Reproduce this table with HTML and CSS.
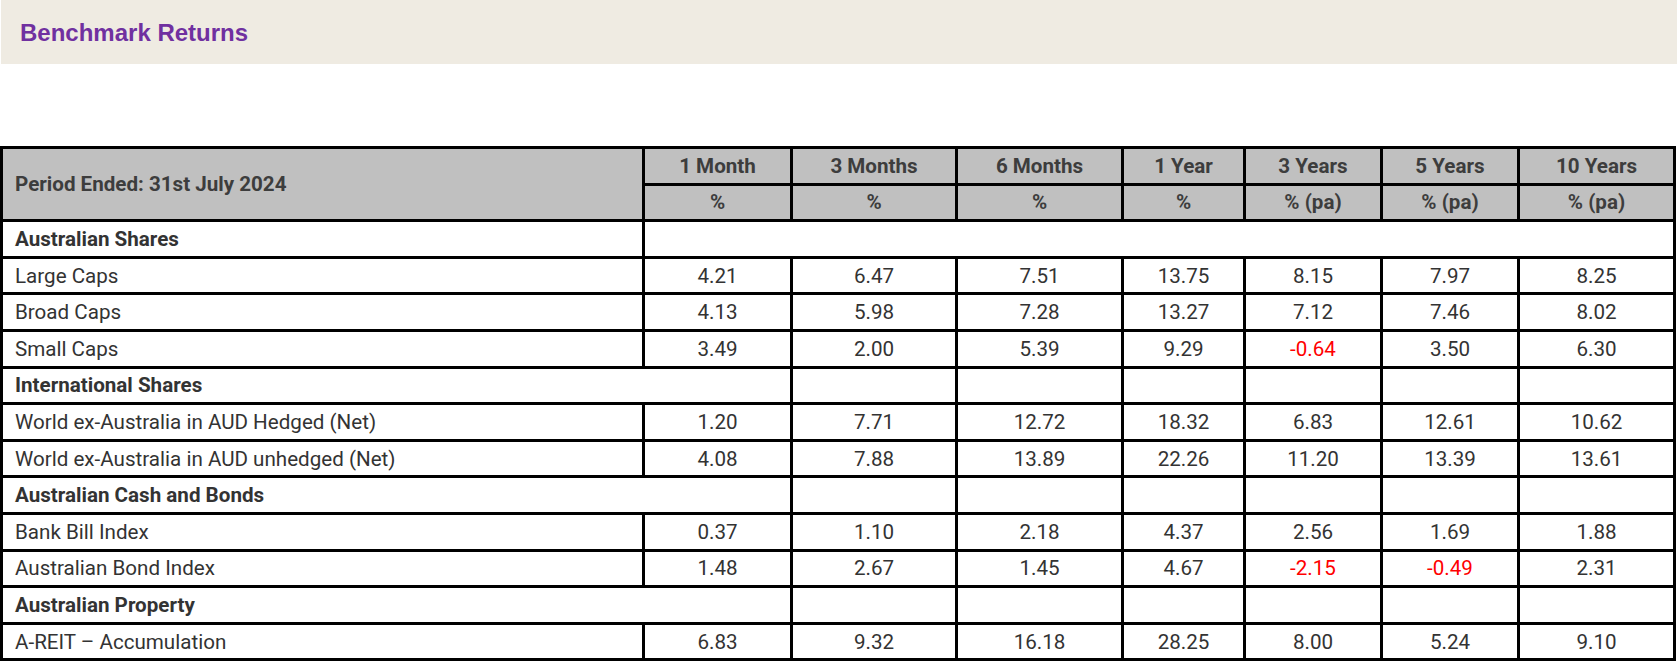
FILE: index.html
```html
<!DOCTYPE html>
<html lang="en">
<head>
<meta charset="utf-8">
<title>Benchmark Returns</title>
<link rel="stylesheet" href="styles.css">
</head>
<body>
<div class="band"><h2 class="title">Benchmark Returns</h2></div>
<table class="returns">
<colgroup>
<col class="c-name"><col class="c-1m"><col class="c-3m"><col class="c-6m"><col class="c-1y"><col class="c-3y"><col class="c-5y"><col class="c-10y">
</colgroup>
<thead>
<tr><th class="period" rowspan="2">Period Ended: 31st July 2024</th><th>1 Month</th><th>3 Months</th><th>6 Months</th><th>1 Year</th><th>3 Years</th><th>5 Years</th><th>10 Years</th></tr>
<tr><th>%</th><th>%</th><th>%</th><th>%</th><th>% (pa)</th><th>% (pa)</th><th>% (pa)</th></tr>
</thead>
<tbody>
<tr><td class="cat">Australian Shares</td><td colspan="7"></td></tr>
<tr><td class="name">Large Caps</td><td>4.21</td><td>6.47</td><td>7.51</td><td>13.75</td><td>8.15</td><td>7.97</td><td>8.25</td></tr>
<tr><td class="name">Broad Caps</td><td>4.13</td><td>5.98</td><td>7.28</td><td>13.27</td><td>7.12</td><td>7.46</td><td>8.02</td></tr>
<tr><td class="name">Small Caps</td><td>3.49</td><td>2.00</td><td>5.39</td><td>9.29</td><td class="neg">-0.64</td><td>3.50</td><td>6.30</td></tr>
<tr><td class="cat" colspan="2">International Shares</td><td></td><td></td><td></td><td></td><td></td><td></td></tr>
<tr><td class="name">World ex-Australia in AUD Hedged (Net)</td><td>1.20</td><td>7.71</td><td>12.72</td><td>18.32</td><td>6.83</td><td>12.61</td><td>10.62</td></tr>
<tr><td class="name">World ex-Australia in AUD unhedged (Net)</td><td>4.08</td><td>7.88</td><td>13.89</td><td>22.26</td><td>11.20</td><td>13.39</td><td>13.61</td></tr>
<tr><td class="cat" colspan="2">Australian Cash and Bonds</td><td></td><td></td><td></td><td></td><td></td><td></td></tr>
<tr><td class="name">Bank Bill Index</td><td>0.37</td><td>1.10</td><td>2.18</td><td>4.37</td><td>2.56</td><td>1.69</td><td>1.88</td></tr>
<tr><td class="name">Australian Bond Index</td><td>1.48</td><td>2.67</td><td>1.45</td><td>4.67</td><td class="neg">-2.15</td><td class="neg">-0.49</td><td>2.31</td></tr>
<tr><td class="cat" colspan="2">Australian Property</td><td></td><td></td><td></td><td></td><td></td><td></td></tr>
<tr><td class="name">A-REIT – Accumulation</td><td>6.83</td><td>9.32</td><td>16.18</td><td>28.25</td><td>8.00</td><td>5.24</td><td>9.10</td></tr>
</tbody>
</table>
</body>
</html>
```
FILE: styles.css
```css
html, body {
  margin: 0;
  padding: 0;
  background: #ffffff;
}
body {
  font-family: Roboto, "Liberation Sans", Arial, sans-serif;
}
.band {
  margin-left: 1px;
  margin-right: 2px;
  height: 64px;
  background: #efebe2;
  display: flex;
  align-items: center;
  padding-left: 19px;
  padding-top: 2px;
  box-sizing: border-box;
}
.title {
  margin: 0;
  font-family: "Liberation Sans", Arial, sans-serif;
  font-size: 24px;
  font-weight: bold;
  color: #7030a0;
  line-height: 1;
}
.returns {
  margin-top: 82px;
  border-collapse: collapse;
  table-layout: fixed;
  width: 1676px;
  font-size: 20.6px;
  color: #333333;
}
.c-name { width: 642px; }
.c-1m { width: 148px; }
.c-3m { width: 165px; }
.c-6m { width: 166px; }
.c-1y { width: 122px; }
.c-3y { width: 137px; }
.c-5y { width: 137px; }
.c-10y { width: 156px; }
.returns th, .returns td {
  border: 3px solid #000000;
  height: 33.6px;
  padding: 0 12px;
  text-align: center;
  vertical-align: middle;
  white-space: nowrap;
}
.returns th {
  background: #c0c0c0;
  color: #3d3d3d;
  font-weight: bold;
}
.returns th.period {
  text-align: left;
}
.returns td.cat {
  text-align: left;
  font-weight: bold;
}
.returns td.name {
  text-align: left;
}
.returns td.neg {
  color: #ff0000;
}
```
